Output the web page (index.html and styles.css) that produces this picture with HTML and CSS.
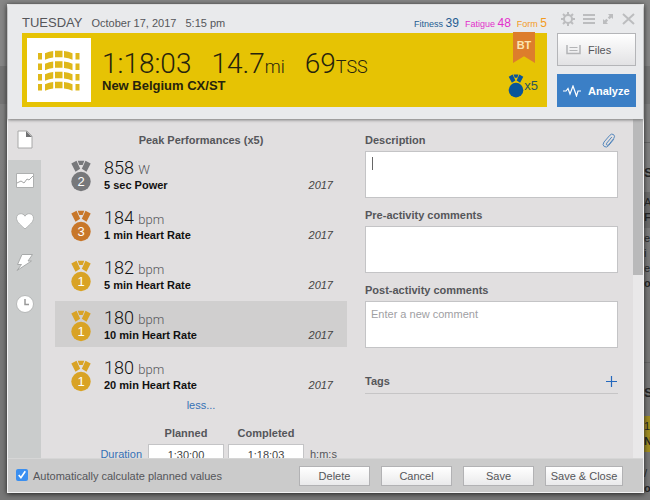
FILE: index.html
```html
<!DOCTYPE html>
<html lang="en">
<head>
<meta charset="utf-8">
<title>New Belgium CX/ST</title>
<link rel="stylesheet" href="styles.css">
</head>
<body>
<svg class="defs" aria-hidden="true">
  <symbol id="medal" viewBox="0 0 20 32">
    <path fill="currentColor" d="M.3 3.600 5.500.8l3.700 7.900-4.700 3zM19.700 3.600 14.500.8l-3.700 7.900 4.700 3zM6.700.8h6.600l-1.600 4.300H8.300z"/>
    <circle cx="10" cy="21.500" r="9.700" fill="currentColor"/>
  </symbol>
</svg>

<aside class="backdrop" aria-hidden="true">
  <section class="week"><b>S</b><div class="band"><span>Av</span><b>Fa</b></div><span>e</span><span>i</span><span>e</span><b>o</b></section>
  <section class="week second"><b>S</b><div class="workout"><span>1:</span><b>Ne</b></div><span>/</span><b>o</b></section>
</aside>

<main class="dialog">
  <header class="head">
    <div class="summary">
      <div class="meta">
        <span class="day">TUESDAY</span>
        <span class="date">October 17, 2017</span>
        <span class="time">5:15 pm</span>
        <div class="scores">
          <span class="fitness">Fitness <b>39</b></span>
          <span class="fatigue">Fatigue <b>48</b></span>
          <span class="form">Form <b>5</b></span>
        </div>
      </div>
      <div class="card">
        <div class="sport">
          <svg viewBox="0 0 44 42" width="44" height="42" fill="#dfb81a">
            <g id="bricks"><path d="M1 4h4v6.500H1zM8 4.200Q12 2.500 16.200 2v6.500Q12 9 8 10.800zM18 1.700h7.500v6.600H18zM27 2q4.500.5 8.500 2.200v6.600Q31.500 9 27 8.500zM38.500 4h4v6.500h-4z"/></g>
            <use href="#bricks" y="10.500"/><use href="#bricks" y="21"/><use href="#bricks" y="31"/>
          </svg>
        </div>
        <div class="facts">
          <div class="numbers"><span>1:18:03</span><span>14.7<small>mi</small></span><span>69<small>TSS</small></span></div>
          <h1>New Belgium CX/ST</h1>
        </div>
        <div class="ribbon">BT</div>
        <div class="count"><svg width="16" height="24"><use href="#medal"/></svg>x5</div>
      </div>
    </div>
    <div class="actions">
      <div class="tools">
        <button aria-label="Settings"><svg width="14" height="14" viewBox="0 0 14 14"><path d="M7 0v14M0 7h14M2 2l10 10M12 2 2 12" stroke="#bcbdbf" stroke-width="2"/><circle cx="7" cy="7" r="4" fill="#e9eaec" stroke="#bcbdbf" stroke-width="2"/></svg></button>
        <button aria-label="Menu"><svg width="12" height="12" viewBox="0 0 12 12"><path d="M0 2h12M0 6h12M0 10h12" stroke="#bcbdbf" stroke-width="2"/></svg></button>
        <button aria-label="Expand"><svg width="12" height="12" viewBox="0 0 12 12" fill="#bcbdbf"><path d="M6 1h5v5L9.300 4.500 7.500 6.300 5.800 4.500 7.500 2.800zM6 11H1V6l1.600 1.600 1.800-1.800 1.700 1.700-1.700 1.800z"/></svg></button>
        <button aria-label="Close"><svg width="13" height="12" viewBox="0 0 13 12"><path d="m1 1 11 10M12 1 1 11" stroke="#bcbdbf" stroke-width="2"/></svg></button>
      </div>
      <button class="big files"><svg width="15" height="10" viewBox="0 0 15 10" fill="none" stroke="#b3b4b6"><path d="M1 0v8.500h13V0" stroke-width="1.500"/><path d="M3.500 2.500h8M3.500 5.500h8"/></svg>Files</button>
      <button class="big analyze"><svg width="18" height="12" viewBox="0 0 18 12"><path d="M0 6h3l2-2.500L7 9l3-8 3.500 10L15 6h3" fill="none" stroke="#fff" stroke-width="1.200"/></svg>Analyze</button>
    </div>
  </header>

  <div class="body">
    <nav class="tabs">
      <button class="active" aria-label="Summary"><svg width="16" height="19" viewBox="0 0 16 19"><path d="M1 1h9l5 5v12H1z" fill="#fff" stroke="#a8a8a8"/><path d="m9 1 6 6H9z" fill="#707173"/></svg></button>
      <button aria-label="Map and graph"><svg width="18" height="15" viewBox="0 0 18 15"><path d="M.5.5h17v14H.5z" fill="#fff" stroke="#aeb0b0"/><path d="m1 10 4-2 3 2 3-4 2 1 4-4" fill="none" stroke="#a3a5a5"/></svg></button>
      <button aria-label="Heart rate"><svg width="18" height="17" viewBox="0 0 18 17"><path d="M9 16C6 13 .5 9.500.5 5.200.5 0 7-.8 9 3.200 11-.8 17.500 0 17.500 5.200 17.500 9.500 12 13 9 16z" fill="#fff" stroke="#b2b4b4"/></svg></button>
      <button aria-label="Power"><svg width="17" height="17" viewBox="0 0 17 17"><path d="M6 .5h10.500L12 7h3.500L1 16.500 5.500 10.500H1.500z" fill="#fff" stroke="#a8aaaa"/></svg></button>
      <button aria-label="Pace"><svg width="18" height="18" viewBox="0 0 18 18"><circle cx="9" cy="9" r="8.500" fill="#fff" stroke="#b6b8b8"/><path d="M9 4v5.500h4" fill="none" stroke="#999" stroke-width="1.500"/></svg></button>
    </nav>

    <section class="left">
      <h2 class="center">Peak Performances (x5)</h2>
      <ul class="peaks">
        <li><span class="medal silver"><svg><use href="#medal"/></svg><i>2</i></span><div><p>858 <small>W</small></p><h3>5 sec Power</h3></div><em>2017</em></li>
        <li><span class="medal bronze"><svg><use href="#medal"/></svg><i>3</i></span><div><p>184 <small>bpm</small></p><h3>1 min Heart Rate</h3></div><em>2017</em></li>
        <li><span class="medal gold"><svg><use href="#medal"/></svg><i>1</i></span><div><p>182 <small>bpm</small></p><h3>5 min Heart Rate</h3></div><em>2017</em></li>
        <li class="hover"><span class="medal gold"><svg><use href="#medal"/></svg><i>1</i></span><div><p>180 <small>bpm</small></p><h3>10 min Heart Rate</h3></div><em>2017</em></li>
        <li><span class="medal gold"><svg><use href="#medal"/></svg><i>1</i></span><div><p>180 <small>bpm</small></p><h3>20 min Heart Rate</h3></div><em>2017</em></li>
      </ul>
      <a class="less" href="#">less...</a>
      <div class="plan">
        <span></span><h2 id="planned">Planned</h2><h2 id="completed">Completed</h2><span></span>
        <label for="duration">Duration</label>
        <input id="duration" value="1:30:00">
        <input aria-labelledby="completed" value="1:18:03">
        <span class="unit">h:m:s</span>
      </div>
    </section>

    <section class="right">
      <div class="field">
        <div class="row"><label for="desc">Description</label><button aria-label="Attach"><svg width="14" height="15" viewBox="0 0 14 15"><path d="M9.800 4 4.700 10.200q-.8 1.200.2 1.900 1 .6 1.900-.5l5-6.200q1.600-2.300-.2-3.800-2-1.400-3.800.7L2 9q-2 2.800.2 4.500 2.400 1.500 4.400-.9l5.200-6.400" fill="none" stroke="#5487bd"/></svg></button></div>
        <div class="box"><textarea id="desc"></textarea><span class="caret"></span></div>
      </div>
      <div class="field">
        <div class="row"><label for="pre">Pre-activity comments</label></div>
        <div class="box"><textarea id="pre"></textarea></div>
      </div>
      <div class="field">
        <div class="row"><label for="post">Post-activity comments</label></div>
        <div class="box"><textarea id="post" placeholder="Enter a new comment"></textarea></div>
      </div>
      <div class="tags"><h2>Tags</h2><button aria-label="Add tag"><svg width="11" height="11" viewBox="0 0 11 11"><path d="M5.500 0v11M0 5.500h11" stroke="#2468bd" stroke-width="1.200"/></svg></button></div>
    </section>
    <div class="scroll"><div class="thumb"></div></div>
  </div>

  <footer class="foot">
    <input type="checkbox" id="auto" checked><label for="auto">Automatically calculate planned values</label>
    <div class="buttons"><button>Delete</button><button>Cancel</button><button>Save</button><button class="wide">Save &amp; Close</button></div>
  </footer>
</main>
</body>
</html>
```

FILE: styles.css
```css
* { box-sizing: border-box; }
body {
  margin: 0;
  height: 100vh;
  position: relative;
  overflow: hidden;
  display: flex;
  background: linear-gradient(#868686 0 66px, #757575 66px 104px, #808080 104px 160px, #777 300px);
  font-family: "Liberation Sans", Arial, sans-serif;
  font-size: 11px;
  line-height: 16px;
  color: #55565a;
}
h1, h2, h3, p, ul { margin: 0; padding: 0; }
h2, .row label { font-size: 11px; line-height: 16px; font-weight: bold; color: #55565a; }
button { font: inherit; color: inherit; padding: 0; border: 0; background: none; }
svg { display: block; flex: none; }
.defs { position: absolute; width: 0; height: 0; }

/* Calendar column behind the dialog */
.backdrop {
  width: 6px;
  margin-left: auto;
  padding-top: 142px;
  overflow: hidden;
  color: #242424;
}
.week { border-top: 1px solid #666; padding-top: 22px; height: 220px; line-height: 15px; }
.week > span, .week > b, .week div > * { display: block; white-space: nowrap; }
.week > b:first-child { font-size: 13px; margin-bottom: 12px; }
.band { background: #6b6b6b; padding: 3px 0; margin-bottom: 3px; }
.second > b:first-child { margin-bottom: 16px; }
.workout { background: #a08d20; padding: 3px 0; margin-bottom: 14px; }

/* Dialog */
.dialog {
  position: absolute;
  inset: 4px 6px 7px 7px;
  display: flex;
  flex-direction: column;
  background: #e1dfe0;
  border: 1px solid #f3f3f4;
  box-shadow: 0 1px 5px #222;
}
.head {
  position: relative;
  z-index: 1;
  display: flex;
  gap: 10px;
  padding: 0 7px 12px 14px;
  background: #e9eaec;
  box-shadow: 0 1px 3px #777;
}
.summary { flex: 1; }
.meta { display: flex; align-items: baseline; height: 28px; padding-top: 10px; white-space: nowrap; }
.day { font-size: 13px; }
.date, .time { font-size: 11px; margin-left: 9px; }
.scores { display: flex; gap: 6px; margin-left: auto; font-size: 9px; }
.scores b { font-size: 12px; font-weight: normal; }
.fitness { color: #265d92; }
.fatigue { color: #e32fcb; }
.form { color: #f39a1e; }
.card {
  position: relative;
  display: flex;
  gap: 11px;
  padding: 5px;
  height: 74px;
  background: #e6c304;
  color: #26230d;
}
.sport { width: 64px; height: 64px; background: #fff; display: grid; place-items: center; }
.numbers { display: flex; gap: 20px; padding-top: 12px; font: 300 28px/27px Roboto, sans-serif; }
.numbers small { font-size: 18px; }
h1 { font-size: 13px; line-height: 12px; color: #26230d; }
.ribbon {
  position: absolute;
  top: -1px;
  right: 12px;
  width: 22px;
  height: 31px;
  background: #dd7d2c;
  clip-path: polygon(0 0, 100% 0, 100% 100%, 50% 78%, 0 100%);
  color: #fbe5b0;
  font-size: 11px;
  font-weight: bold;
  line-height: 26px;
  text-align: center;
}
.count {
  position: absolute;
  right: 9px;
  bottom: 9px;
  display: flex;
  align-items: center;
  font-size: 13px;
  color: #2c5659;
}
.count svg { color: #09559a; }
.actions { width: 79px; }
.tools { height: 28px; padding: 0 1px 0 4px; display: flex; align-items: center; justify-content: space-between; }
.big {
  width: 100%;
  height: 33px;
  display: flex;
  align-items: center;
  font-size: 11px;
}
.files { gap: 7px; padding-left: 8px; border: 1px solid #b4b5b8; background: linear-gradient(#fff, #e2e2e4); }
.analyze { gap: 7px; margin-top: 8px; padding-left: 6px; background: #3b7fc6; color: #fff; font-weight: bold; }

/* Body */
.body { flex: 1; min-height: 0; display: flex; overflow: hidden; }
.tabs { flex: none; width: 33px; background: #cacccc; }
.tabs button { width: 100%; height: 41px; display: grid; place-items: center; }
.tabs .active { background: #e1dfe0; }
.left { flex: 292; min-width: 0; margin-left: 14px; padding-top: 13px; }
.right { flex: 253; min-width: 0; margin: 0 15px 0 18px; padding-top: 13px; }
.center { text-align: center; }
.peaks { list-style: none; margin-top: 3px; }
.peaks li {
  display: flex;
  align-items: flex-end;
  height: 46px;
  margin-bottom: 4px;
  padding: 0 14px 4px 16px;
}
.hover { background: #d0cfcf; }
.medal { position: relative; width: 20px; height: 32px; margin: 0 13px 1px 0; }
.medal svg { width: 20px; height: 32px; }
.medal i {
  position: absolute;
  inset: 12px 0 0;
  text-align: center;
  font-size: 13px;
  font-style: normal;
  line-height: 20px;
  color: #fff;
}
.silver { color: #77787b; }
.bronze { color: #c8772a; }
.gold { color: #d9a325; }
.peaks p { font: 300 18px/14px Roboto, sans-serif; color: #111; }
.peaks small { font-size: 13px; color: #55565a; }
.peaks h3 { font-size: 11px; line-height: 16px; color: #111; }
.peaks li > div { flex: 1; }
.peaks em { font-size: 11px; color: #444; }
.less { display: block; text-align: center; font-size: 11px; color: #3571b5; text-decoration: none; margin-top: -4px; }
.plan {
  display: grid;
  grid-template-columns: 89px 76px 76px auto;
  gap: 3px 4px;
  margin-top: 12px;
  line-height: 20px;
}
.plan h2 { text-align: center; }
.plan label { text-align: right; color: #3571b5; padding-right: 2px; }
.plan input {
  width: 100%;
  height: 22px;
  padding: 0;
  border: 1px solid #c4c4c6;
  background: #fff;
  text-align: center;
  font: inherit;
  line-height: 16px;
  color: #444;
}
.unit { padding-left: 2px; }
.field { margin-bottom: 9px; }
.row { display: flex; justify-content: space-between; align-items: center; height: 16px; padding-right: 2px; margin-bottom: 3px; }
.box { position: relative; }
textarea {
  display: block;
  width: 100%;
  height: 47px;
  padding: 4px 5px;
  border: 1px solid #c4c4c6;
  background: #fff;
  resize: none;
  font: inherit;
  color: #444;
  outline: 0;
}
textarea::placeholder { color: #a0a0a3; }
.caret { position: absolute; left: 7px; top: 6px; width: 1px; height: 13px; background: #666; }
.tags {
  display: flex;
  justify-content: space-between;
  align-items: center;
  margin-top: 25px;
  padding: 0 1px 4px 0;
  border-bottom: 1px solid #c6c5c6;
}
.scroll { flex: none; width: 10px; background: #e9e8e9; }
.thumb { height: 46%; background: #b9b9ba; }

/* Footer */
.foot {
  display: flex;
  align-items: center;
  height: 34px;
  padding: 0 20px 0 8px;
  background: #cbcbcb;
  border-top: 1px solid #d6d6d6;
}
.foot input {
  appearance: none;
  width: 12px;
  height: 12px;
  margin: 0 5px 2px 0;
  border-radius: 2px;
  background: #3b8ff0 url("data:image/svg+xml,%3Csvg xmlns='http://www.w3.org/2000/svg' viewBox='0 0 11 11'%3E%3Cpath d='M2.500 5.500l2 2.500 4-6' fill='none' stroke='white' stroke-width='1.500'/%3E%3C/svg%3E");
}
.buttons { display: flex; gap: 11px; margin-left: auto; }
.buttons button {
  width: 71px;
  height: 20px;
  border: 1px solid #b2b2b4;
  background: linear-gradient(#fff, #eaeaeb);
  white-space: nowrap;
}
.buttons .wide { width: 78px; }
```
